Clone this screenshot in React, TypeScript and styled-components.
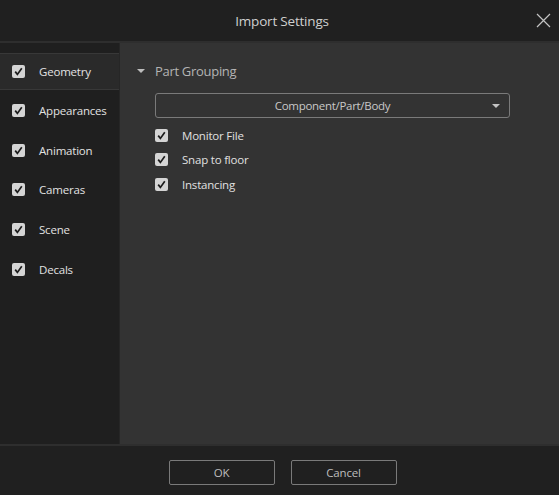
import styled, { createGlobalStyle } from "styled-components";

const GlobalStyle = createGlobalStyle`
  html, body {
    margin: 0;
    padding: 0;
    background: #202020;
  }
  * {
    box-sizing: border-box;
  }
`;

const SIDEBAR_ITEMS = ["Geometry", "Appearances", "Animation", "Cameras", "Scene", "Decals"];
const OPTIONS = ["Monitor File", "Snap to floor", "Instancing"];

const Check = ({ size = 13 }: { size?: number }) => (
  <S.Box size={size}>
    <svg width={size} height={size} viewBox="0 0 13 13">
      <path d="M3.2 6.6 L5.4 9.4 L9.8 3.2" fill="none" stroke="#1c1c1c" strokeWidth="1.7" />
    </svg>
  </S.Box>
);

const App = () => {
  return (
    <>
      <GlobalStyle />
      <S.Dialog>
        <S.TitleBar>
          <S.Title>Import Settings</S.Title>
          <S.Close aria-label="close">
            <svg width="15" height="15" viewBox="0 0 15 15">
              <path d="M1 1 L14 14 M14 1 L1 14" stroke="#c4c4c4" strokeWidth="1.2" />
            </svg>
          </S.Close>
        </S.TitleBar>

        <S.Body>
          <S.Sidebar>
            {SIDEBAR_ITEMS.map((item, i) => (
              <S.NavItem key={item} active={i === 0}>
                <Check />
                <S.NavLabel>{item}</S.NavLabel>
              </S.NavItem>
            ))}
          </S.Sidebar>

          <S.Content>
            <S.SectionHeader>
              <S.Caret />
              <S.SectionTitle>Part Grouping</S.SectionTitle>
            </S.SectionHeader>
            <S.Select>
              <span>Component/Part/Body</span>
              <S.SelectCaret />
            </S.Select>
            <S.Options>
              {OPTIONS.map((opt) => (
                <S.Option key={opt}>
                  <Check />
                  <S.OptionLabel>{opt}</S.OptionLabel>
                </S.Option>
              ))}
            </S.Options>
          </S.Content>
        </S.Body>

        <S.Footer>
          <S.Button>OK</S.Button>
          <S.Button>Cancel</S.Button>
        </S.Footer>
      </S.Dialog>
    </>
  );
};

const S = {
  Dialog: styled.div`
    width: 559px;
    height: 495px;
    display: flex;
    flex-direction: column;
    background: #202020;
    font-family: "Open Sans", "Noto Sans", sans-serif;
    color: #d2d2d2;
  `,

  TitleBar: styled.div`
    position: relative;
    height: 43px;
    flex-shrink: 0;
    display: flex;
    align-items: center;
    justify-content: center;
    border-bottom: 2px solid #2e2e2e;
  `,

  Title: styled.div`
    font-size: 13.5px;
    letter-spacing: -0.2px;
    color: #cfcfcf;
    margin-left: 5px;
  `,

  Close: styled.div`
    position: absolute;
    right: 8px;
    top: 13px;
    width: 15px;
    height: 15px;
    display: flex;
  `,

  Body: styled.div`
    flex: 1;
    display: flex;
    min-height: 0;
  `,

  Sidebar: styled.div`
    width: 120px;
    background: #1f1f1f;
    border-right: 1px solid #262626;
    padding-top: 10px;
    display: flex;
    flex-direction: column;
  `,

  NavItem: styled.div<{ active?: boolean }>`
    height: ${({ active }) => (active ? "37px" : "39.6px")};
    display: flex;
    align-items: center;
    padding-left: 12px;
    gap: 14px;
    background: ${({ active }) => (active ? "#2a2a2a" : "transparent")};
    border-top: 1px solid ${({ active }) => (active ? "#383838" : "transparent")};
    border-bottom: 1px solid ${({ active }) => (active ? "#383838" : "transparent")};
    margin-bottom: ${({ active }) => (active ? "1px" : "0")};
  `,

  NavLabel: styled.span`
    font-size: 11.5px;
    letter-spacing: -0.2px;
    color: #e2e2e2;
  `,

  Box: styled.span<{ size: number }>`
    width: ${({ size }) => size}px;
    height: ${({ size }) => size}px;
    border-radius: 2px;
    background: #d4d4d4;
    display: inline-flex;
    flex-shrink: 0;
  `,

  Content: styled.div`
    flex: 1;
    background: #333333;
    padding: 17px 49px 0 17px;
  `,

  SectionHeader: styled.div`
    display: flex;
    align-items: center;
    gap: 10px;
    height: 22px;
  `,

  Caret: styled.span`
    width: 0;
    height: 0;
    border-left: 4px solid transparent;
    border-right: 4px solid transparent;
    border-top: 4px solid #bdbdbd;
  `,

  SectionTitle: styled.span`
    font-size: 13px;
    letter-spacing: -0.3px;
    color: #b4b4b4;
  `,

  Select: styled.div`
    position: relative;
    margin: 11px 0 0 18px;
    height: 25px;
    border: 1px solid #7a7a7a;
    border-radius: 3px;
    display: flex;
    align-items: center;
    justify-content: center;
    font-size: 11.5px;
    letter-spacing: -0.3px;
    color: #c8c8c8;
  `,

  SelectCaret: styled.span`
    position: absolute;
    right: 9px;
    top: 10px;
    border-left: 4px solid transparent;
    border-right: 4px solid transparent;
    border-top: 4px solid #c4c4c4;
  `,

  Options: styled.div`
    margin: 5px 0 0 18px;
    display: flex;
    flex-direction: column;
  `,

  Option: styled.div`
    height: 24.5px;
    display: flex;
    align-items: center;
    gap: 14px;
  `,

  OptionLabel: styled.span`
    font-size: 11.5px;
    letter-spacing: -0.2px;
    color: #e0e0e0;
  `,

  Footer: styled.div`
    height: 51px;
    flex-shrink: 0;
    border-top: 2px solid #2e2e2e;
    display: flex;
    align-items: center;
    justify-content: center;
    gap: 16px;
    padding: 3px 0 0 6px;
  `,

  Button: styled.button`
    width: 106px;
    height: 25px;
    background: transparent;
    border: 1px solid #7a7a7a;
    border-radius: 2px;
    font-family: inherit;
    font-size: 11.5px;
    letter-spacing: -0.2px;
    color: #bdbdbd;
    padding: 0;
  `,
};

export default App;
